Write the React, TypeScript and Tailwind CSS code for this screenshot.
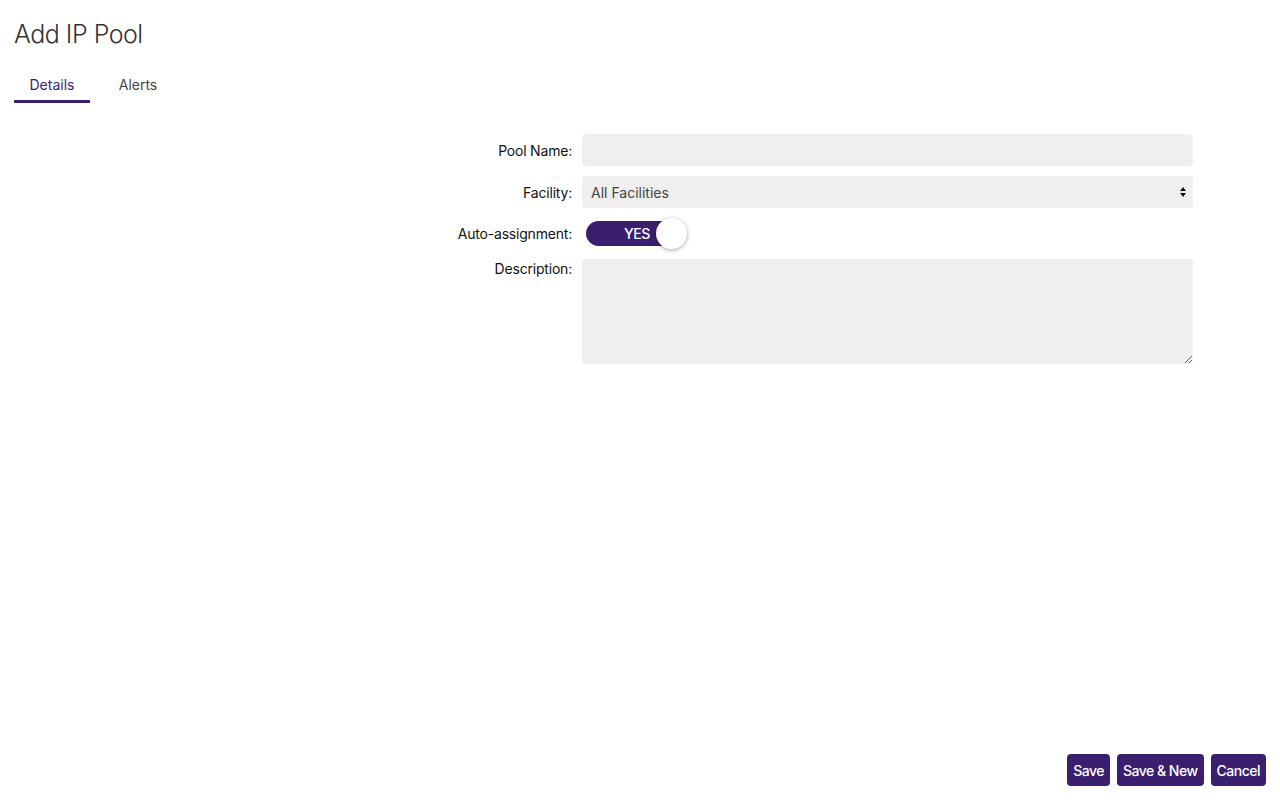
import { useState } from "react";

const font = { fontFamily: "Inter, 'Noto Sans', sans-serif" };

function Field({ label, children, top }: { label: string; children: React.ReactNode; top?: boolean }) {
  return (
    <div className={`grid grid-cols-[558px_611px] gap-x-[10px] ${top ? "items-start" : "items-center"}`}>
      <label className={`text-right text-[14px] text-[#111] tracking-[-0.2px] ${top ? "-mt-[1px]" : ""}`}>{label}</label>
      {children}
    </div>
  );
}

export default function App() {
  const [tab, setTab] = useState("details");
  const [auto, setAuto] = useState(true);

  return (
    <div className="flex h-[800px] flex-col bg-white" style={font}>
      <h1 className="px-[14px] pt-[17px] text-[25px] font-light leading-[34px] tracking-[-0.5px] text-[#333]">
        Add IP Pool
      </h1>

      <div className="mt-[17px] flex px-[14px]">
        <button
          type="button"
          onClick={() => setTab("details")}
          className={`h-[35px] w-[76px] border-b-[3px] text-[14px] ${tab === "details" ? "border-[#3a1f6e] text-[#3a1f6e]" : "border-transparent text-[#444]"}`}
        >
          Details
        </button>
        <button
          type="button"
          onClick={() => setTab("alerts")}
          className={`ml-[10px] h-[35px] w-[76px] border-b-[3px] text-[14px] ${tab === "alerts" ? "border-[#3a1f6e] text-[#3a1f6e]" : "border-transparent text-[#444]"}`}
        >
          Alerts
        </button>
      </div>

      <form className="mt-[31px] flex flex-col gap-[10px] px-[14px]">
        <Field label="Pool Name:">
          <input type="text" className="h-[32px] rounded-[4px] bg-[#efefef] px-[9px] text-[14px] outline-none" />
        </Field>
        <Field label="Facility:">
          <div className="relative h-[32px] rounded-[4px] bg-[#efefef]">
            <select className="h-full w-full appearance-none bg-transparent px-[9px] text-[14px] text-[#444] outline-none">
              <option>All Facilities</option>
            </select>
            <svg className="pointer-events-none absolute right-[7px] top-[11px]" width="6" height="10" viewBox="0 0 6 10">
              <path d="M3 0 L6 4 L0 4 Z M0 6 L6 6 L3 10 Z" fill="#111" />
            </svg>
          </div>
        </Field>
        <Field label="Auto-assignment:">
          <div className="flex h-[31px] items-center">
            <button
              type="button"
              onClick={() => setAuto(!auto)}
              className="relative ml-[4px] flex h-[25px] w-[95px] items-center rounded-full bg-[#3a1f6e]"
            >
              <span className="ml-[38px] text-[14px] font-medium tracking-[-0.5px] text-white">{auto ? "YES" : "NO"}</span>
              <span className="absolute right-[-6px] top-[-3px] h-[31px] w-[31px] rounded-full bg-white shadow-[0_1px_4px_rgba(0,0,0,0.35)]" />
            </button>
          </div>
        </Field>
        <Field label="Description:" top>
          <textarea className="h-[105px] rounded-[4px] bg-[#efefef] px-[9px] py-[6px] text-[14px] outline-none" />
        </Field>
      </form>

      <div className="mt-auto flex justify-end gap-[7px] px-[14px] pb-[14px]">
        <button type="button" className="h-[32px] rounded-[4px] bg-[#3a1f6e] px-[6px] text-[14px] font-medium tracking-[-0.5px] text-white">
          Save
        </button>
        <button type="button" className="h-[32px] rounded-[4px] bg-[#3a1f6e] px-[6px] text-[14px] font-medium tracking-[-0.5px] text-white">
          Save &amp; New
        </button>
        <button type="button" className="h-[32px] rounded-[4px] bg-[#3a1f6e] px-[6px] text-[14px] font-medium tracking-[-0.5px] text-white">
          Cancel
        </button>
      </div>
    </div>
  );
}
